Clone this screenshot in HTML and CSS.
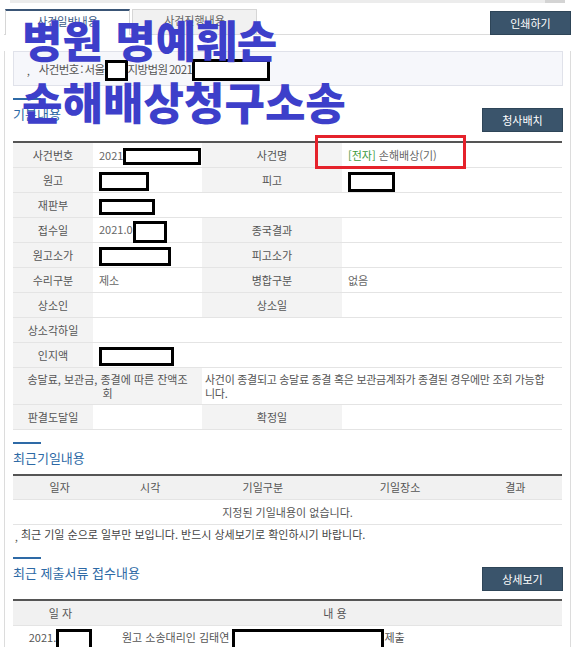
FILE: index.html
```html
<!DOCTYPE html>
<html lang="ko">
<head>
<meta charset="utf-8">
<title>사건일반내용</title>
<link rel="stylesheet" href="styles.css">
</head>
<body>
<div class="scrollstrip"><span class="thumb"></span></div>
<div class="wrap">
  <div class="tabbar">
    <div class="tab active">사건일반내용</div>
    <div class="tab">사건진행내용</div>
    <button class="btn btn-print">인쇄하기</button>
  </div>
  <div class="panel">
    <div class="crumb"><span class="dot">,</span><span class="crumb-text">사건번호 : 서울<span class="redact r1"></span>지방법원 2021<span class="redact r2"></span></span></div>

    <div class="sec-head">
      <div class="sec-title"><span class="bar"></span><h2>기본내용</h2></div>
      <button class="btn">청사배치</button>
    </div>
    <table class="info">
      <colgroup><col class="c1"><col class="c2"><col class="c3"><col class="c4"></colgroup>
      <tr><th>사건번호</th><td>2021<span class="redact r3"></span></td><th>사건명</th><td><span class="green">[전자]</span> 손해배상(기)</td></tr>
      <tr><th>원고</th><td><span class="redact r4"></span></td><th>피고</th><td><span class="redact r5"></span></td></tr>
      <tr><th>재판부</th><td colspan="3"><span class="redact r6"></span></td></tr>
      <tr><th>접수일</th><td>2021.0<span class="redact r7"></span></td><th>종국결과</th><td></td></tr>
      <tr><th>원고소가</th><td><span class="redact r8"></span></td><th>피고소가</th><td></td></tr>
      <tr><th>수리구분</th><td>제소</td><th>병합구분</th><td>없음</td></tr>
      <tr><th>상소인</th><td></td><th>상소일</th><td></td></tr>
      <tr><th>상소각하일</th><td colspan="3"></td></tr>
      <tr><th>인지액</th><td colspan="3"><span class="redact r9"></span></td></tr>
      <tr class="tall"><th colspan="2">송달료, 보관금, 종결에 따른 잔액조회</th><td colspan="2" class="long">사건이 종결되고 송달료 종결 혹은 보관금계좌가 종결된 경우에만 조회 가능합니다.</td></tr>
      <tr><th>판결도달일</th><td></td><th>확정일</th><td></td></tr>
    </table>

    <div class="sec-head sec2">
      <div class="sec-title"><span class="bar"></span><h2>최근기일내용</h2></div>
    </div>
    <table class="list dates">
      <colgroup><col class="p17"><col class="p16"><col class="p25"><col class="p25"><col class="p17"></colgroup>
      <tr><th>일자</th><th>시각</th><th>기일구분</th><th>기일장소</th><th>결과</th></tr>
      <tr><td colspan="5" class="center">지정된 기일내용이 없습니다.</td></tr>
    </table>
    <p class="note"><span class="dot">,</span> 최근 기일 순으로 일부만 보입니다. 반드시 상세보기로 확인하시기 바랍니다.</p>

    <div class="sec-head sec3">
      <div class="sec-title"><span class="bar"></span><h2>최근 제출서류 접수내용</h2></div>
      <button class="btn">상세보기</button>
    </div>
    <table class="list docs">
      <colgroup><col class="d1"><col></colgroup>
      <tr><th>일 자</th><th>내 용</th></tr>
      <tr><td class="center">2021.<span class="redact r10"></span></td><td class="content">원고 소송대리인 김태연 <span class="redact r11"></span>제출</td></tr>
    </table>
  </div>
</div>

<div class="overlay-title">병원 명예훼손<br>손해배상청구소송</div>
<div class="red-box"></div>
</body>
</html>
```

FILE: styles.css
```css
* { box-sizing: border-box; }
html, body { margin: 0; padding: 0; background: #fff; }
body {
  font-family: "Noto Sans CJK KR", "Noto Sans", sans-serif;
  font-size: 11px;
  color: #555;
  width: 580px;
  height: 647px;
  overflow: hidden;
  position: relative;
}
.scrollstrip {
  margin-left: 10px;
  width: 555px;
  height: 3px;
  background: #ececec;
  display: flex;
  justify-content: flex-end;
}
.scrollstrip .thumb { width: 20px; height: 3px; background: #d4d4d4; }

.wrap { padding: 0 9px 0 4px; }
.tabbar {
  display: flex;
  align-items: flex-end;
  margin-top: 7px;
  height: 25px;
  border-bottom: 1px solid #dcdcdc;
}
.tab {
  width: 125px;
  height: 25px;
  line-height: 21px;
  text-align: center;
  border: 1px solid #d6d6d6;
  border-bottom: none;
  background: #f1f1f1;
  color: #666;
  margin-right: 2px;
}
.tab.active {
  background: #fff;
  border-top: 2px solid #3a5576;
  color: #3a5a86;
  height: 26px;
  margin-bottom: -1px;
  margin-left: 1px;
}
.btn {
  font-family: inherit;
  font-size: 11px;
  color: #fff;
  background: #3a546b;
  border: 1px solid #2e4558;
  width: 81px;
  height: 24px;
  padding: 0;
  line-height: 22px;
  cursor: pointer;
}
.btn-print { margin-left: auto; margin-bottom: -1px; position: relative; z-index: 1; }

.panel {
  border-left: 1px solid #dcdcdc;
  border-right: 1px solid #dcdcdc;
  padding: 0 7px 20px 8px;
  width: 567px;
}
.crumb {
  margin-top: 16px;
  height: 35px;
  background: #f6f7fb;
  border: 1px solid #e0e2ea;
  padding: 0 0 0 13px;
  display: flex;
  align-items: center;
  font-size: 11.5px;
  color: #555;
  white-space: nowrap;
}
.crumb .dot { margin-right: 9px; }
.crumb-text { letter-spacing: -0.6px; word-spacing: -1px; }
.dot { color: #555; font-size: 10px; position: relative; top: 2px; }

.redact {
  display: inline-block;
  border: 3px solid #000;
  background: #fff;
  vertical-align: middle;
  margin-top: -6px;
  margin-bottom: -6px;
  letter-spacing: 0;
}
.r1 { width: 23px; height: 21px; }
.r2 { width: 78px; height: 22px; }
.r3 { width: 78px; height: 17px; }
.r4 { width: 50px; height: 19px; }
.r5 { width: 47px; height: 20px; }
.r6 { width: 56px; height: 16px; }
.r7 { width: 34px; height: 22px; }
.r8 { width: 72px; height: 19px; }
.r9 { width: 75px; height: 19px; }
.r10 { width: 36px; height: 22px; }
.r11 { width: 152px; height: 22px; }

.sec-head {
  display: flex;
  justify-content: space-between;
  align-items: flex-start;
  margin-top: 12px;
}
.sec-title { display: flex; flex-direction: column; }
.bar { display: block; width: 28px; height: 2px; background: #2e6aa6; margin-bottom: 6px; }
.sec-title h2 {
  margin: 0;
  font-size: 13px;
  font-weight: normal;
  line-height: 16px;
  color: #2d69a5;
}
.sec-head .btn { margin-top: 10px; }

table {
  width: 549px;
  border-collapse: collapse;
  table-layout: fixed;
  border-top: 2px solid #555;
}
.info { margin-top: 9px; }
.info .c1 { width: 80px; }
.info .c2 { width: 109px; }
.info .c3 { width: 140px; }
.info .c4 { width: 220px; }
.dates .p17 { width: 17%; }
.dates .p16 { width: 16%; }
.dates .p25 { width: 25%; }
th, td {
  height: 25px;
  padding: 0 6px;
  border-bottom: 1px solid #e4e4e4;
  font-weight: normal;
  line-height: 14px;
  vertical-align: middle;
}
.info th { background: #f3f3f3; color: #555; text-align: center; }
.info td { background: #fff; color: #666; text-align: left; white-space: nowrap; }
.info td.long { white-space: normal; padding: 4px 14px 4px 3px; color: #555; letter-spacing: -0.3px; }
.info tr.tall th { padding: 4px 10px; }
.info tr.tall th, .info tr.tall td { height: 36px; }
.green { color: #3c9a3c; }

.sec2 { margin-top: 12px; }
.list th { background: #f1f1f1; color: #555; text-align: center; height: 25px; }
.list td { color: #555; height: 25px; }
.list .center { text-align: center; }
.dates { margin-top: 8px; }

.note {
  margin: 1px 0 0;
  height: 16px;
  line-height: 16px;
  color: #444;
  font-size: 11px;
  padding-left: 2px;
}
.sec3 { margin-top: 15px; }
.docs { margin-top: 8px; }
.docs .d1 { width: 95px; }
.docs td.content { padding-left: 14px; }

.overlay-title {
  position: absolute;
  left: 22px;
  top: 8px;
  font-family: "Noto Sans CJK KR", sans-serif;
  font-weight: 900;
  font-size: 44px;
  line-height: 62px;
  color: #3d3fca;
  white-space: nowrap;
  pointer-events: none;
}
.red-box {
  position: absolute;
  left: 315px;
  top: 135px;
  width: 151px;
  height: 34px;
  border: 3px solid #e5222b;
  pointer-events: none;
}
```
